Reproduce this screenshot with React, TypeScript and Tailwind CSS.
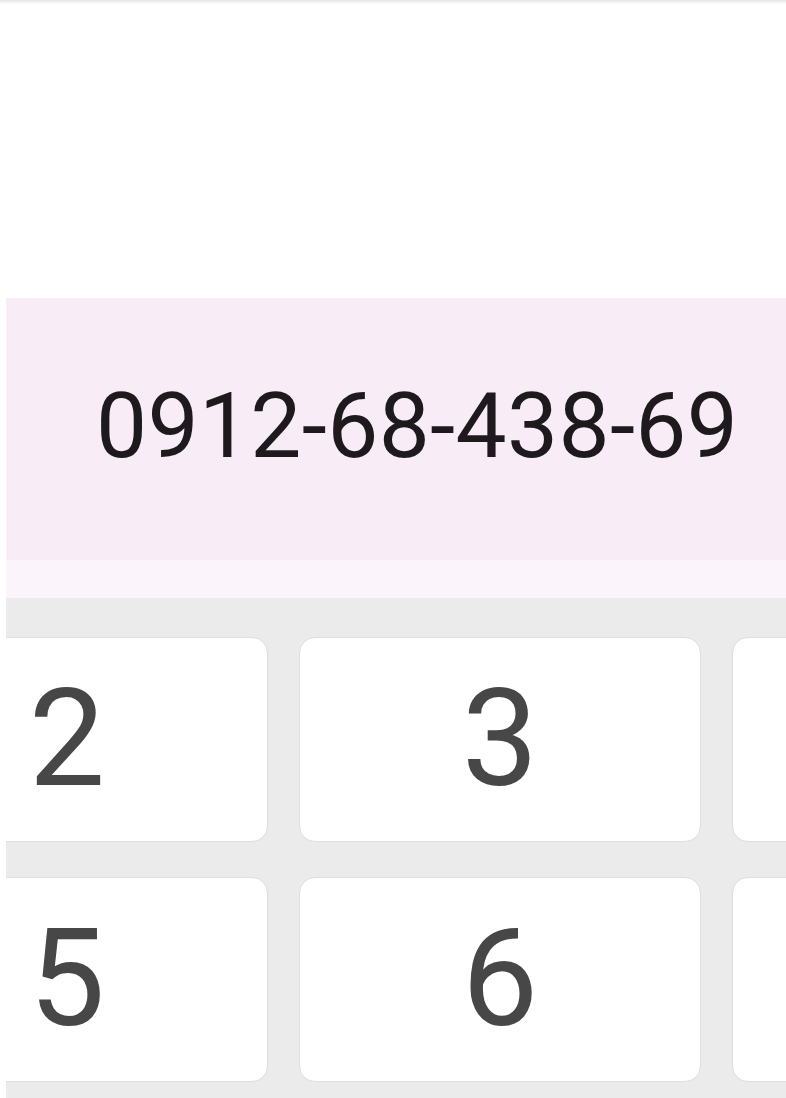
const rows = [
  ["2", "3", ""],
  ["5", "6", ""],
]

function Key({ label }: { label: string }) {
  return (
    <div className="w-[402px] h-[205px] shrink-0 rounded-[16px] bg-white border border-[#dedede] pt-[33px] text-center text-[136px] leading-none text-[#474747]">
      {label}
    </div>
  )
}

export default function App() {
  return (
    <div
      className="w-[786px] h-[1098px] bg-white overflow-hidden flex flex-col"
      style={{ fontFamily: "Roboto, 'Liberation Sans', sans-serif" }}
    >
      {/* status bar shadow */}
      <div className="h-[4px] bg-gradient-to-b from-[#e4e4e4] to-white" />
      <div className="h-[294px]" />

      <div className="flex-1 flex flex-col pl-[6px]">
        {/* dialed number */}
        <div className="h-[262px] bg-[#f8ecf6] pt-[83px] pl-[90px]">
          <div className="text-[91px] leading-none tracking-[0.3px] text-[#1d191d] whitespace-nowrap">
            0912-68-438-69
          </div>
        </div>
        <div className="h-[38px] bg-[#fcf4fb]" />

        {/* keypad */}
        <div className="flex-1 bg-[#ebebeb] pt-[39px] overflow-hidden">
          <div className="flex flex-col gap-[35px] ml-[-140px]">
            {rows.map((row, i) => (
              <div key={i} className="flex gap-[31px]">
                {row.map((k, j) => (
                  <Key key={j} label={k} />
                ))}
              </div>
            ))}
          </div>
        </div>
      </div>
    </div>
  )
}
